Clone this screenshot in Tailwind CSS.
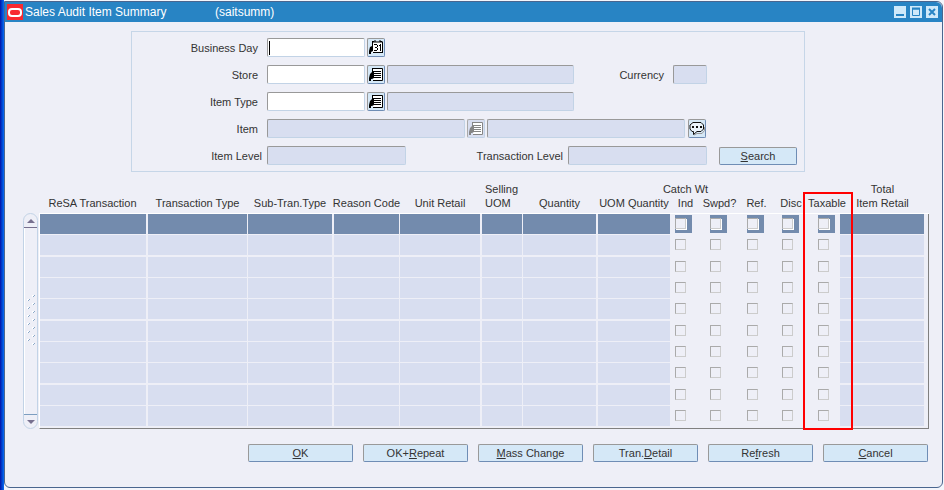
<!DOCTYPE html>
<html lang="en">
<head>
  <meta charset="UTF-8">
  <meta name="viewport" content="width=device-width, initial-scale=1.0">
  <title>Sales Audit Item Summary</title>
  <script src="https://cdn.jsdelivr.net/npm/@tailwindcss/browser@4"></script>
</head>
<body class="min-h-screen flex bg-[#f4f5fb] font-['Liberation_Sans',Arial,sans-serif] text-[11px] leading-[14px] text-[#333333]">
  <!-- icons shared by the buttons -->
  <svg class="hidden">
    <symbol id="icon-list" viewBox="0 0 16 16">
      <path d="M5 1H15V14H5Z" fill="#ffffff"/>
      <path d="M4 1.5H14.5V13.5H5M4.5 1V5M6 4.5H13M6 6.5H13M6 8.5H13M6 10.5H13" fill="none" stroke="currentColor"/>
      <path d="M4 4L6 4V11L4 12H3V14H1V11L2 7L4 5Z" fill="currentColor"/>
    </symbol>
    <symbol id="icon-calendar" viewBox="0 0 16 16">
      <path d="M4 2H14V13H4Z" fill="#ffffff"/>
      <path d="M4 2H15M14.5 2V13M5 12.5H15M4.5 2V6M6 1H8M11 1H13" fill="none" stroke="currentColor"/>
      <path d="M4 1H6V2H4ZM12 1H14V2H12Z" fill="currentColor"/>
      <path d="M6 4.5H9M9.5 5V7M7 7.5H9M9.5 8V10M6 10.5H9M11 5.5H12M12.5 4V11" fill="none" stroke="currentColor"/>
      <path d="M4 5L5 6V11L3 12V14H1V11L2 7L4 6Z" fill="currentColor"/>
    </symbol>
    <symbol id="icon-comment" viewBox="0 0 16 16">
      <path d="M5 14L8 12.5H13L15.5 9.5V6" fill="none" stroke="#999999"/>
      <path d="M4 1.5H12L14.5 4V8L12 10.5H8L4.5 13.5V10.5H3L1 8V4Z" fill="#eaf3fb" stroke="#111111"/>
      <path d="M3 5H5V7H3ZM7 5H9V7H7ZM11 5H13V7H11Z" fill="#111111"/>
    </symbol>
  </svg>

  <div class="w-1 shrink-0 bg-linear-to-r from-[#0808a8] to-[#0a6cf5]"></div>

  <main class="flex-1 mt-px mr-px mb-[2px] bg-[#eeeff7] border border-[#4a668f] rounded-md rounded-tl-none">
    <header class="h-5 flex items-center pl-[2px] pr-1 bg-[#2884c4] text-white rounded-tr-md">
      <svg class="w-4 h-4 mr-[2px]" viewBox="0 0 16 16">
        <path d="M0 0H16V16H0Z" fill="#f8292f"/>
        <rect x="2" y="5" width="12" height="7" rx="3" fill="none" stroke="#ffffff" stroke-width="2"/>
      </svg>
      <h1 class="w-[190px] text-[12px]">Sales Audit Item Summary</h1>
      <span class="text-[12px]">(saitsumm)</span>
      <div class="ml-auto flex gap-1">
        <button aria-label="Minimize" class="w-3 h-3 bg-[#cfe9fa]"><svg class="w-3 h-3" viewBox="0 0 12 12"><path d="M2 9H10" stroke="#2884c4" stroke-width="2"/></svg></button>
        <button aria-label="Maximize" class="w-3 h-3 bg-[#cfe9fa]"><svg class="w-3 h-3" viewBox="0 0 12 12"><path d="M2.5 3H9.5V9.5H2.5Z" fill="none" stroke="#2884c4"/><path d="M2 2.5H10" stroke="#2884c4" stroke-width="2"/></svg></button>
        <button aria-label="Close" class="w-3 h-3 bg-[#cfe9fa]"><svg class="w-3 h-3" viewBox="0 0 12 12"><path d="M3 3L9 9M9 3L3 9" stroke="#2884c4" stroke-width="2"/></svg></button>
      </div>
    </header>

    <form class="mt-[9px] ml-[126px] mr-[137px] border border-[#c6d6e8] py-1.5 flex flex-col gap-2">
      <div class="flex h-[19px] items-center">
        <label for="businessDay" class="w-[126px] mr-[9px] text-right">Business Day</label>
        <div class="relative">
          <input id="businessDay" type="text" class="block w-[98px] h-[19px] bg-white border border-[#c2d3e6] border-t-[#999999] border-l-[#999999] rounded-xs">
          <span class="absolute left-[2px] top-[3px] w-px h-[14px] bg-black"></span>
        </div>
        <button type="button" aria-label="Calendar" class="ml-[2px] w-[18px] h-[19px] flex items-center justify-center bg-[#d5e8f7] border border-[#999999] border-b-[#6f8db5] border-r-[#6f8db5] rounded-xs text-black"><svg class="w-4 h-4 shrink-0"><use href="#icon-calendar"/></svg></button>
      </div>
      <div class="flex h-[19px] items-center">
        <label for="store" class="w-[126px] mr-[9px] text-right">Store</label>
        <input id="store" type="text" class="w-[98px] h-[19px] bg-white border border-[#c2d3e6] border-t-[#999999] border-l-[#999999] rounded-xs">
        <button type="button" aria-label="Store list" class="mx-[2px] w-[18px] h-[19px] flex items-center justify-center bg-[#d5e8f7] border border-[#999999] border-b-[#6f8db5] border-r-[#6f8db5] rounded-xs text-black"><svg class="w-4 h-4 shrink-0"><use href="#icon-list"/></svg></button>
        <input type="text" aria-label="Store name" readonly class="w-[187px] h-[19px] bg-[#d8def0] border border-[#c2d3e6] border-t-[#999999] border-l-[#999999] rounded-xs">
        <label for="currency" class="w-[90px] mr-[9px] text-right">Currency</label>
        <input id="currency" type="text" readonly class="w-[34px] h-[19px] bg-[#d8def0] border border-[#c2d3e6] border-t-[#999999] border-l-[#999999] rounded-xs">
      </div>
      <div class="flex h-[19px] items-center">
        <label for="itemType" class="w-[126px] mr-[9px] text-right">Item Type</label>
        <input id="itemType" type="text" class="w-[98px] h-[19px] bg-white border border-[#c2d3e6] border-t-[#999999] border-l-[#999999] rounded-xs">
        <button type="button" aria-label="Item type list" class="mx-[2px] w-[18px] h-[19px] flex items-center justify-center bg-[#d5e8f7] border border-[#999999] border-b-[#6f8db5] border-r-[#6f8db5] rounded-xs text-black"><svg class="w-4 h-4 shrink-0"><use href="#icon-list"/></svg></button>
        <input type="text" aria-label="Item type name" readonly class="w-[187px] h-[19px] bg-[#d8def0] border border-[#c2d3e6] border-t-[#999999] border-l-[#999999] rounded-xs">
      </div>
      <div class="flex h-[19px] items-center">
        <label for="item" class="w-[126px] mr-[9px] text-right">Item</label>
        <input id="item" type="text" readonly class="w-[198px] h-[19px] bg-[#d8def0] border border-[#c2d3e6] border-t-[#999999] border-l-[#999999] rounded-xs">
        <button type="button" aria-label="Item list" disabled class="mx-[2px] w-[18px] h-[19px] flex items-center justify-center bg-[#d8def0] border border-[#aaaaaa] border-b-[#c2d3e6] border-r-[#c2d3e6] rounded-xs text-[#858585]"><svg class="w-4 h-4 shrink-0"><use href="#icon-list"/></svg></button>
        <input type="text" aria-label="Item description" readonly class="w-[198px] h-[19px] bg-[#d8def0] border border-[#c2d3e6] border-t-[#999999] border-l-[#999999] rounded-xs">
        <button type="button" aria-label="Comments" class="ml-[3px] w-[18px] h-[19px] flex items-center justify-center bg-[#d5e8f7] border border-[#999999] border-b-[#6f8db5] border-r-[#6f8db5] rounded-xs"><svg class="w-4 h-4 shrink-0"><use href="#icon-comment"/></svg></button>
      </div>
      <div class="flex h-[19px] items-center">
        <label for="itemLevel" class="w-[130px] mr-[5px] text-right">Item Level</label>
        <input id="itemLevel" type="text" readonly class="w-[139px] h-[19px] bg-[#d8def0] border border-[#c2d3e6] border-t-[#999999] border-l-[#999999] rounded-xs">
        <label for="tranLevel" class="w-[157px] mr-[5px] text-right">Transaction Level</label>
        <input id="tranLevel" type="text" readonly class="w-[139px] h-[19px] bg-[#d8def0] border border-[#c2d3e6] border-t-[#999999] border-l-[#999999] rounded-xs">
        <button type="button" class="ml-3 w-[78px] h-[18px] bg-[#d5e8f7] border border-[#999999] border-b-[#6f8db5] border-r-[#6f8db5] rounded-xs"><u>S</u>earch</button>
      </div>
    </form>

    <section class="mt-[10px] ml-[18px] mr-[13px] flex">
      <!-- scroll bar -->
      <div class="mt-[31px] mr-px w-[15px] shrink-0 flex flex-col border border-[#c2d3e6] rounded-full">
        <button aria-label="Scroll up" class="h-[14px] flex items-center justify-center border-b border-[#77708f]"><svg class="w-2 h-1" viewBox="0 0 8 4"><path d="M4 0L8 4H0Z" fill="#77708f"/></svg></button>
        <div class="flex-1 flex items-center justify-center border-l border-white">
          <svg class="w-2 h-[52px]" viewBox="0 0 8 52">
            <pattern id="grip" width="8" height="8" patternUnits="userSpaceOnUse">
              <path d="M5 0H7V2H5ZM0 4H2V6H0Z" fill="#ffffff"/>
              <path d="M6 2L8 0M1 6L3 4" stroke="#8ba8c8"/>
            </pattern>
            <rect width="8" height="52" fill="url(#grip)"/>
          </svg>
        </div>
        <button aria-label="Scroll down" class="h-[14px] flex items-center justify-center border-t border-[#7c9ec0]"><svg class="w-2 h-1" viewBox="0 0 8 4"><path d="M0 0H8L4 4Z" fill="#77708f"/></svg></button>
      </div>

      <div class="relative flex-1">
        <table class="w-full table-fixed border-separate border-spacing-0">
          <colgroup>
            <col class="w-[109px]"><col class="w-[100px]"><col class="w-[86px]"><col class="w-[66px]"><col class="w-[82px]">
            <col class="w-[41px]"><col class="w-[75px]"><col class="w-[73px]"><col class="w-[35px]"><col class="w-[37px]">
            <col class="w-[35px]"><col class="w-[36px]"><col class="w-[26px]"><col class="w-[89px]">
          </colgroup>
          <thead>
            <tr id="headRow"></tr>
          </thead>
          <tbody id="itemRows"></tbody>
        </table>
        <!-- highlight round the Taxable column -->
        <div class="absolute top-[10px] -bottom-px right-[76px] w-[50px] border-2 border-[#ff0000] pointer-events-none"></div>
      </div>
    </section>

    <footer class="mt-[15px] ml-[243px] mr-[14px] grid grid-cols-6 gap-[10px]">
      <button class="h-[18px] bg-[#d5e8f7] border border-[#999999] border-b-[#6f8db5] border-r-[#6f8db5] rounded-xs"><u>O</u>K</button>
      <button class="h-[18px] bg-[#d5e8f7] border border-[#999999] border-b-[#6f8db5] border-r-[#6f8db5] rounded-xs">OK+<u>R</u>epeat</button>
      <button class="h-[18px] bg-[#d5e8f7] border border-[#999999] border-b-[#6f8db5] border-r-[#6f8db5] rounded-xs"><u>M</u>ass Change</button>
      <button class="h-[18px] bg-[#d5e8f7] border border-[#999999] border-b-[#6f8db5] border-r-[#6f8db5] rounded-xs">Tran.<u>D</u>etail</button>
      <button class="h-[18px] bg-[#d5e8f7] border border-[#999999] border-b-[#6f8db5] border-r-[#6f8db5] rounded-xs">Re<u>f</u>resh</button>
      <button class="h-[18px] bg-[#d5e8f7] border border-[#999999] border-b-[#6f8db5] border-r-[#6f8db5] rounded-xs"><u>C</u>ancel</button>
    </footer>
  </main>

  <script>
    // gap: padding to the right of the cells in the column
    const columns = [
      { name: 'ReSA Transaction', gap: 'pr-[2px]' },
      { name: 'Transaction Type', gap: 'pr-px' },
      { name: 'Sub-Tran.Type', gap: 'pr-[2px]' },
      { name: 'Reason Code', gap: 'pr-px' },
      { name: 'Unit Retail', gap: 'pr-[2px]' },
      { name: 'Selling<br>UOM', gap: 'pr-px', align: 'justify-start pl-[3px] text-left' },
      { name: 'Quantity', gap: 'pr-[2px]' },
      { name: 'UOM Quantity', gap: 'pr-px' },
      { name: 'Catch Wt<br>Ind', check: true, gap: 'pr-1.5' },
      { name: 'Swpd?', check: true, gap: 'pr-2.5' },
      { name: 'Ref.', check: true, gap: 'pr-2' },
      { name: 'Disc', check: true, gap: 'pr-2.5' },
      { name: 'Taxable', check: true, gap: 'pr-0' },
      { name: 'Total<br>Item Retail', gap: 'pr-1', last: true }
    ];
    const rowCount = 10;

    document.getElementById('headRow').innerHTML = columns.map(col =>
      `<th scope="col" class="p-0 pb-[3px] align-bottom font-normal border-b border-white">
        <div class="flex whitespace-nowrap text-center ${col.align || 'justify-center'} ${col.gap}"><span>${col.name}</span></div>
      </th>`).join('');

    let rows = '';
    for (let i = 0; i < rowCount; i++) {
      const current = i === 0;
      // every third row is followed by a wider gap
      let below = i % 3 === 1 ? 'pb-[2px]' : 'pb-px';
      if (i === rowCount - 1) below = 'pb-[2px] border-b border-b-[#808080]';
      rows += '<tr>';
      columns.forEach((col, n) => {
        const label = `${col.name.replace('<br>', ' ')} ${i + 1}`;
        if (col.check) {
          rows += `<td class="p-0 pl-1 ${below} align-top"><div class="h-5 pt-px">
            <div class="w-[17px] h-[18px] pt-[3px] ${current ? 'bg-[#738bad]' : ''}">
              <input type="checkbox" aria-label="${label}" class="block appearance-none w-[11px] h-[11px] bg-[#eeeff7] border border-[#cccccc] border-t-[#aaaaaa] border-l-[#aaaaaa] ${current ? 'shadow-[1px_1px_0_#ffffff]' : ''}">
            </div></div></td>`;
        } else {
          const side = n === 0 ? 'border-l border-l-white' : col.last ? 'border-r border-r-[#808080]' : '';
          rows += `<td class="p-0 ${col.gap} ${below} ${side}">
            <input type="text" aria-label="${label}" class="block w-full h-5 ${current ? 'bg-[#738bad]' : 'bg-[#d8def0]'}"></td>`;
        }
      });
      rows += '</tr>';
    }
    document.getElementById('itemRows').innerHTML = rows;
  </script>
</body>
</html>
